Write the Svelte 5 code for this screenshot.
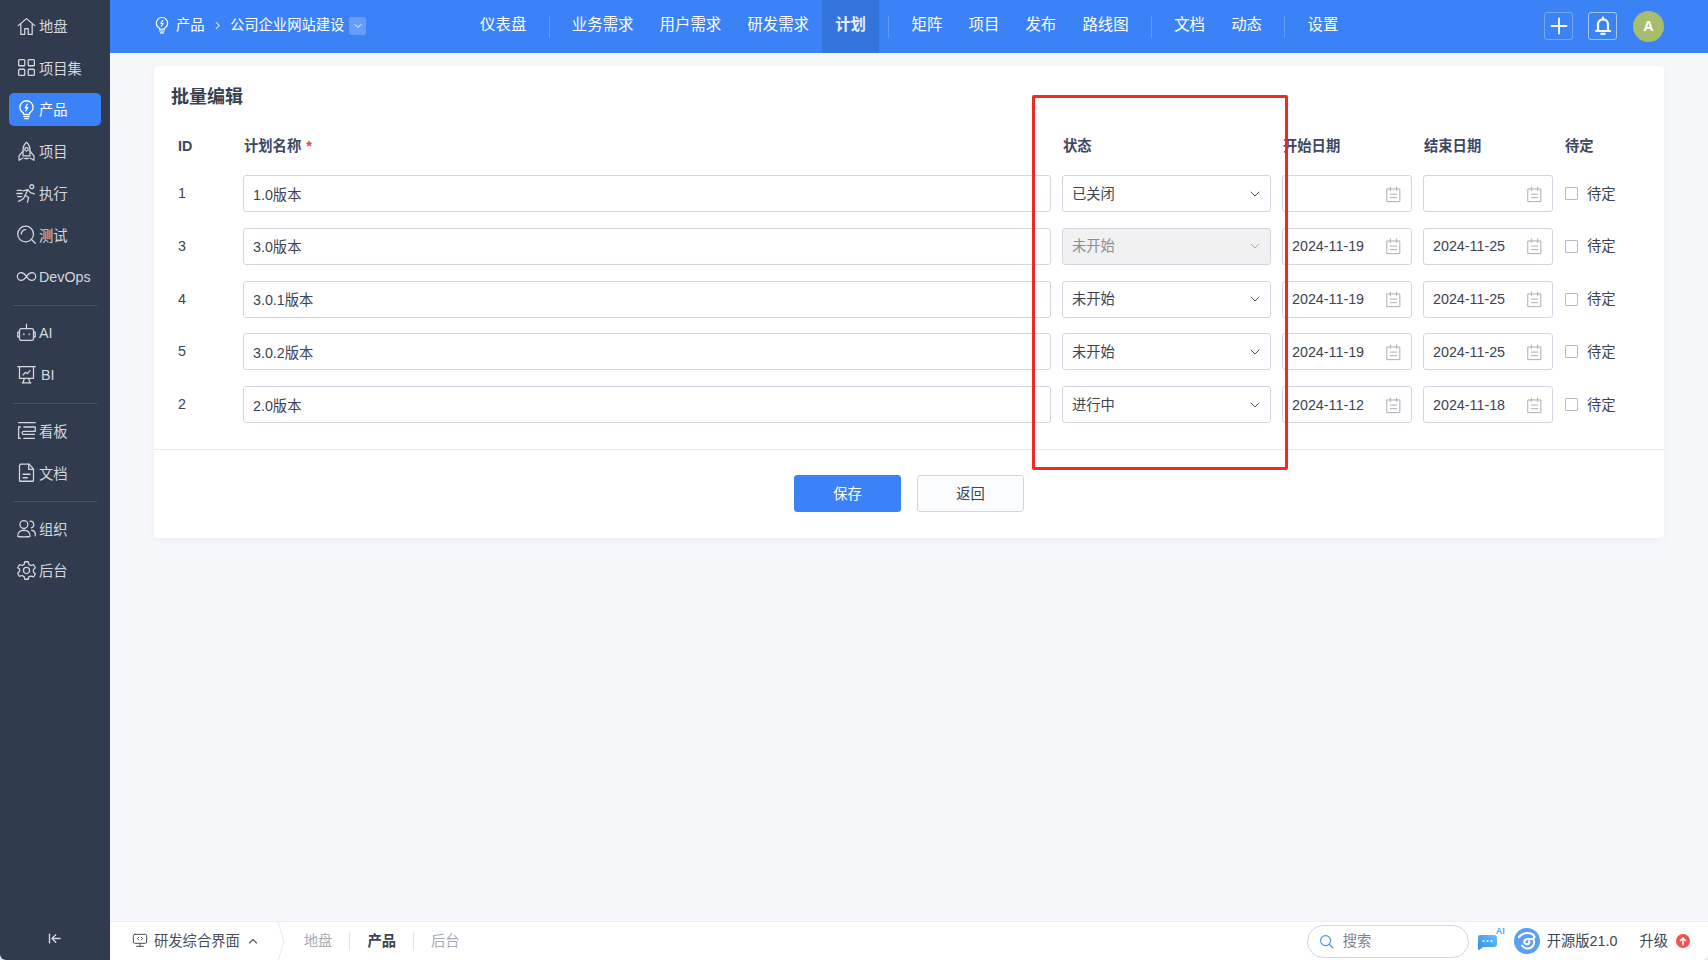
<script>
  const paths = {
    home: ['M2.5 11 12 3l9.500 8', 'M5.500 9V21h4.500v-6.500h4V21h4.500V9'],
    grid: ['M4 3h5a1 1 0 0 1 1 1v5a1 1 0 0 1-1 1H4a1 1 0 0 1-1-1V4a1 1 0 0 1 1-1z', 'M15 3h5a1 1 0 0 1 1 1v5a1 1 0 0 1-1 1h-5a1 1 0 0 1-1-1V4a1 1 0 0 1 1-1z', 'M4 14h5a1 1 0 0 1 1 1v5a1 1 0 0 1-1 1H4a1 1 0 0 1-1-1v-5a1 1 0 0 1 1-1z', 'M15 14h5a1 1 0 0 1 1 1v5a1 1 0 0 1-1 1h-5a1 1 0 0 1-1-1v-5a1 1 0 0 1 1-1z'],
    bulb: ['M8.500 17.500v-1.600C6 14.600 4.500 12.200 4.500 9.500a7.500 7.500 0 0 1 15 0c0 2.700-1.500 5.100-4 6.400v1.600z', 'M9 20h6', 'M10 22.500h4', 'M13 6l-2.500 4h3L11 13.500'],
    rocket: ['M12 1.500c3 2.500 4 6 4 9.500v6H8v-6c0-3.500 1-7 4-9.500z', 'M8 11.500l-4.500 5.500v5l4.500-2.500', 'M16 11.500l4.500 5.500v5l-4.500-2.500', 'M12 7.500a2 2 0 1 0 0 4 2 2 0 0 0 0-4z', 'M10 20h4'],
    run: ['M18 2a2.200 2.200 0 1 0 0 4.400A2.200 2.200 0 0 0 18 2z', 'M8 9l5.500-1.500 3 3.500 4.500 1.500', 'M13.500 7.500l-3 6.500 4 2.500-1.500 5.500', 'M10.500 14l-2 4-5.500 3', 'M1.500 8.500h5', 'M1 12h6', 'M2 15.500h4.500'],
    test: ['M11 2.500a9 9 0 1 0 0 18 9 9 0 0 0 0-18z', 'M17.500 17.500 22 22', 'M6 11.500a5 5 0 0 1 5-5'],
    inf: ['M12 12c-2-3-3.500-4.500-6-4.500a4.500 4.500 0 0 0 0 9c2.500 0 4-1.500 6-4.500zm0 0c2 3 3.500 4.500 6 4.500a4.500 4.500 0 0 0 0-9c-2.500 0-4 1.500-6 4.500z'],
    robot: ['M6 7.500h12a2 2 0 0 1 2 2V19a2 2 0 0 1-2 2H6a2 2 0 0 1-2-2V9.500a2 2 0 0 1 2-2z', 'M12 7.500V3', 'M12 2.500v.1', 'M4 11.500H2v5.500h2', 'M20 11.500h2v5.500h-2', 'M9 13.500v1', 'M15 13.500v1'],
    board: ['M2 3h20', 'M4 3v13.500h16V3', 'M8 21.500l1.500-5', 'M16 21.500l-1.500-5', 'M7 21.500h10', 'M8 12.500l3-3 2 1.500 3-3.500'],
    kanban: ['M3 3h19', 'M3 8h2', 'M3 8v13h2', 'M9 8h13v5H9c-1.500 0-2 .8-2 1.500v.5c0 1 .5 1.500 2 1.500h12', 'M9 21h12'],
    doc: ['M5 2.500h10l5 5.500v13a1 1 0 0 1-1 1H5a1 1 0 0 1-1-1v-17a1 1 0 0 1 1-1z', 'M14.500 2.500V8.500H20', 'M8 14h8', 'M8 18h5'],
    org: ['M9 3a4.500 4.500 0 1 0 0 9 4.500 4.500 0 0 0 0-9z', 'M2 21c-.5-5 3-7 7-7s7.500 2 7 7c-2 .8-12 .8-14 0z', 'M16 3.500a4 4 0 0 1 1.500 7.800', 'M18 14c3 .5 4.500 3 4 6.500'],
    gear: ['M12 8.500a3.500 3.500 0 1 0 0 7 3.500 3.500 0 0 0 0-7z', 'M10 2h4l.7 3 2.400 1.300 3-.9 2 3.400-2.200 2.200v2.800l2.200 2.200-2 3.400-3-.9L14.700 19 14 22h-4l-.7-3-2.400-1.300-3 .9-2-3.400 2.200-2.200v-2.800L1.900 8.800l2-3.400 3 .9L9.300 5z'],
    collapse: ['M4 5v14', 'M21 12H9', 'M14 6l-6 6 6 6'],
    chev: ['M6 9l6 6 6-6'],
    right: ['M9 5l7 7-7 7'],
    up: ['M5 16l7-7 7 7'],
    cal: ['M4 5h16v16H4z', 'M8 2.500V7', 'M16 2.500V7', 'M8 11.500h8', 'M8 16h8'],
    plus: ['M12 3v18', 'M3 12h18'],
    bell: ['M6 17.500V10a6 6 0 0 1 12 0v7.500', 'M3.500 18h17', 'M12 2v2', 'M10 21.500h4'],
    screen: ['M4 3.500h16a2 2 0 0 1 2 2V15a2 2 0 0 1-2 2H4a2 2 0 0 1-2-2V5.500a2 2 0 0 1 2-2z', 'M12 17v4', 'M7 21.500h10', 'M10 8l-2 2 2 2', 'M14 8l2 2-2 2'],
    search: ['M10.500 2.500a8 8 0 1 0 0 16 8 8 0 0 0 0-16z', 'M16.500 16.500 22 22']
  };

  const menu = [
    [{ icon: 'home', label: '地盘' }, { icon: 'grid', label: '项目集' }, { icon: 'bulb', label: '产品', active: true }, { icon: 'rocket', label: '项目' }, { icon: 'run', label: '执行' }, { icon: 'test', label: '测试' }, { icon: 'inf', label: 'DevOps', latin: true }],
    [{ icon: 'robot', label: 'AI', latin: true }, { icon: 'board', label: 'BI', latin: true }],
    [{ icon: 'kanban', label: '看板' }, { icon: 'doc', label: '文档' }],
    [{ icon: 'org', label: '组织' }, { icon: 'gear', label: '后台' }]
  ];

  const nav = [
    [{ label: '仪表盘' }],
    [{ label: '业务需求' }, { label: '用户需求' }, { label: '研发需求' }, { label: '计划', active: true }],
    [{ label: '矩阵' }, { label: '项目' }, { label: '发布' }, { label: '路线图' }],
    [{ label: '文档' }, { label: '动态' }],
    [{ label: '设置' }]
  ];

  const plans = [
    { id: 1, name: '1.0版本', status: '已关闭', begin: '', end: '' },
    { id: 3, name: '3.0版本', status: '未开始', begin: '2024-11-19', end: '2024-11-25', disabled: true },
    { id: 4, name: '3.0.1版本', status: '未开始', begin: '2024-11-19', end: '2024-11-25' },
    { id: 5, name: '3.0.2版本', status: '未开始', begin: '2024-11-19', end: '2024-11-25' },
    { id: 2, name: '2.0版本', status: '进行中', begin: '2024-11-12', end: '2024-11-18' }
  ];
</script>

{#snippet icon(name, cls = '')}
  <svg class={'ico ' + cls} viewBox="0 0 24 24" fill="none" stroke="currentColor" stroke-linecap="round" stroke-linejoin="round">
    {#each paths[name] as d}<path {d} />{/each}
  </svg>
{/snippet}

<div class="app">
  <aside class="side">
    {#each menu as group, g}
      {#if g > 0}<div class="side-sep"></div>{/if}
      {#each group as item}
        <div class="side-item" class:on={item.active}>
          {@render icon(item.icon, 'side-ico')}
          <span class="side-label" class:latin={item.latin} class:bi={item.label === 'BI'}>{item.label}</span>
        </div>
      {/each}
    {/each}
    <div class="side-foot">{@render icon('collapse', 'foot-ico')}</div>
  </aside>

  <div class="main">
    <header class="top">
      <div class="crumbs">
        {@render icon('bulb', 'crumb-ico')}
        <span class="lift">产品</span>
        {@render icon('right', 'crumb-sep')}
        <span class="crumb-name lift">公司企业网站建设</span>
        <span class="crumb-drop">{@render icon('chev', 'drop-ico')}</span>
      </div>
      <nav class="nav">
        {#each nav as group, g}
          {#if g > 0}<i class="nav-sep"></i>{/if}
          {#each group as item}
            <span class="nav-item" class:on={item.active}>{item.label}</span>
          {/each}
        {/each}
      </nav>
      <div class="tools">
        <span class="tool">{@render icon('plus', 'tool-plus')}</span>
        <span class="tool bright">{@render icon('bell', 'tool-bell')}</span>
        <span class="avatar">A</span>
      </div>
    </header>

    <main class="content">
      <section class="card">
        <h1 class="title">批量编辑</h1>
        <div class="table">
          <div class="th first">ID</div>
          <div class="th">计划名称 <em>*</em></div>
          <div class="th status-th">状态</div>
          <div class="th">开始日期</div>
          <div class="th">结束日期</div>
          <div class="th">待定</div>

          {#each plans as p}
            <div class="cell first id">{p.id}</div>
            <div class="field name">{p.name}</div>
            <div class="field select" class:disabled={p.disabled}>
              <span class="lift">{p.status}</span>
              {@render icon('chev', 'sel-ico')}
            </div>
            <div class="field date"><span>{p.begin}</span>{@render icon('cal', 'cal-ico')}</div>
            <div class="field date"><span>{p.end}</span>{@render icon('cal', 'cal-ico')}</div>
            <label class="cell check"><i class="box"></i><span class="lift">待定</span></label>
          {/each}
        </div>
        <div class="actions">
          <button class="btn primary">保存</button>
          <button class="btn">返回</button>
        </div>
        <div class="mark"></div>
      </section>
    </main>

    <footer class="bottom">
      <div class="mode">
        {@render icon('screen', 'mode-ico')}
        <span class="lift">研发综合界面</span>
        {@render icon('up', 'mode-up')}
      </div>
      <svg class="slash" viewBox="0 0 8 39" fill="none" stroke="#e5e7ec"><path d="M1 0l6 20-6 19" /></svg>
      <div class="tabs">
        <span class="tab lift">地盘</span><i></i><span class="tab cur lift">产品</span><i></i><span class="tab lift">后台</span>
      </div>
      <div class="status">
        <div class="search">{@render icon('search', 'search-ico')}<span class="lift">搜索</span></div>
        <div class="chat">
          <svg viewBox="0 0 25 22" width="25" height="22">
            <defs><linearGradient id="cg" x1="0" y1="1" x2="1" y2="0"><stop offset="0" stop-color="#2f8bf0" /><stop offset="1" stop-color="#6cc0fb" /></linearGradient></defs>
            <path d="M3 6h14a3 3 0 0 1 3 3v6a3 3 0 0 1-3 3H6l-4 3a1 1 0 0 1-1-1V8a2 2 0 0 1 2-2z" fill="url(#cg)" />
            <circle cx="6.500" cy="12" r="1" fill="#fff" /><circle cx="10.500" cy="12" r="1" fill="#fff" /><circle cx="14.500" cy="12" r="1" fill="#fff" />
          </svg>
          <b>AI</b>
        </div>
        <svg class="logo" viewBox="0 0 26 26">
          <circle cx="13" cy="13" r="13" fill="#5a9ff0" />
          <path d="M5 9c3-4 9-5 13-3 3 1.500 3 4 1 5-2 .8-4-.5-6 0-3 .8-4 4-1 5 2 .6 4-1 3-2.500" fill="none" stroke="#fff" stroke-width="2.200" stroke-linecap="round" />
          <path d="M20 13c1 4-3 8-7 7.500-2-.2-4-1.500-5-3" fill="none" stroke="#fff" stroke-width="2" stroke-linecap="round" />
        </svg>
        <span class="ver lift">开源版21.0</span>
        <span class="up lift">升级</span>
        <svg class="up-dot" viewBox="0 0 14 14">
          <circle cx="7" cy="7" r="7" fill="#f0524f" />
          <path d="M7 11V4.500M4.500 6.500 7 4l2.500 2.500" fill="none" stroke="#fff" stroke-width="1.500" stroke-linecap="round" />
        </svg>
      </div>
    </footer>
  </div>
</div>

<style>
  :global(body) {
    margin: 0;
    background: #e6e7ea;
  }

  .app {
    display: flex;
    height: 960px;
    overflow: hidden;
    border-radius: 0 0 6px 6px;
    font-family: "Liberation Sans", "Noto Sans CJK SC", sans-serif;
    font-size: 14.3px;
    color: #3c4353;
  }

  .ico {
    display: block;
    flex: none;
  }

  .lift {
    padding-bottom: 3px;
  }

  .side {
    flex: none;
    display: flex;
    flex-direction: column;
    gap: 8.8px;
    box-sizing: border-box;
    width: 110px;
    padding-top: 9.5px;
    background: #303b4e;
    color: #d3d8df;
  }

  .side-item {
    display: flex;
    align-items: center;
    gap: 2px;
    height: 33px;
    margin: 0 9px;
    padding-left: 6px;
    border-radius: 5px;
  }

  .side-item.on {
    background: #3b82f6;
    color: #fff;
  }

  .side-label {
    padding-bottom: 1.5px;
  }

  .side-label.latin {
    padding-bottom: 0;
  }

  .bi {
    margin-left: 2px;
  }

  :global(.side-ico) {
    width: 21px;
    height: 21px;
    margin: 0 .5px;
    stroke-width: 1.45;
  }

  .side-sep {
    height: 1px;
    margin: 3.3px 13px 1.3px;
    background: #47536a;
  }

  .side-foot {
    display: flex;
    justify-content: center;
    margin-top: auto;
    padding: 0 2px 14px 0;
  }

  :global(.foot-ico) {
    width: 15px;
    height: 15px;
    stroke-width: 2.2;
  }

  .main {
    flex: 1;
    display: flex;
    flex-direction: column;
    min-width: 0;
    background: #f6f7fa;
  }

  .top {
    flex: none;
    display: flex;
    align-items: center;
    height: 53px;
    padding: 0 44px 0 43px;
    background: #3b82f6;
    color: #fff;
  }

  .crumbs {
    display: flex;
    align-items: center;
    width: 314px;
    font-size: 14.3px;
  }

  .crumbs .lift {
    padding-bottom: 6px;
  }

  :global(.crumb-ico) {
    width: 18px;
    height: 18px;
    margin: 0 5px 3px 0;
    stroke-width: 1.6;
  }

  :global(.crumb-sep) {
    width: 11px;
    height: 11px;
    margin: 0 6.5px 3px 7.9px;
    stroke-width: 2.4;
    opacity: 0.7;
  }

  .crumb-name {
    white-space: nowrap;
  }

  .crumb-drop {
    display: flex;
    align-items: center;
    justify-content: center;
    width: 17px;
    height: 18px;
    margin: 0 0 1px 5px;
    border-radius: 2px;
    background: rgba(255, 255, 255, 0.22);
  }

  :global(.drop-ico) {
    width: 12px;
    height: 12px;
    stroke-width: 2;
  }

  .nav {
    display: flex;
    align-items: center;
    height: 53px;
    font-size: 15.4px;
  }

  .nav-item {
    display: flex;
    align-items: center;
    height: 53px;
    padding: 0 13.1px 7px;
    box-sizing: border-box;
    white-space: nowrap;
  }

  .nav-item.on {
    background: #3374dd;
    font-weight: 700;
    color: #e8eefb;
  }

  .nav-sep {
    width: 1px;
    height: 22px;
    margin: 0 9.2px;
    background: rgba(255, 255, 255, 0.22);
  }

  .tools {
    display: flex;
    align-items: center;
    margin-left: auto;
    padding-bottom: 1px;
  }

  .tool {
    display: flex;
    align-items: center;
    justify-content: center;
    box-sizing: border-box;
    width: 29px;
    height: 28px;
    margin-right: 15px;
    border: 1px solid rgba(255, 255, 255, 0.3);
    border-radius: 3px;
  }

  .tool.bright {
    margin-right: 16px;
    border-color: rgba(255, 255, 255, 0.55);
  }

  :global(.tool-plus) {
    width: 20px;
    height: 20px;
    stroke-width: 2.2;
  }

  :global(.tool-bell) {
    width: 20px;
    height: 20px;
    stroke-width: 2.6;
  }

  .avatar {
    display: flex;
    align-items: center;
    justify-content: center;
    width: 31px;
    height: 31px;
    border-radius: 50%;
    background: #a5bd6d;
    font-size: 14.3px;
    font-weight: 700;
  }

  .content {
    flex: 1;
    padding: 13px 44px 0;
    min-height: 0;
  }

  .card {
    position: relative;
    padding: 16px 0 25.5px;
    border-radius: 4px;
    background: #fff;
    box-shadow: 0 2px 8px rgba(40, 50, 70, 0.05);
  }

  .title {
    margin: 0 0 22.3px 17px;
    font-size: 18px;
    line-height: 30px;
    font-weight: 700;
    color: #383f4e;
  }

  .table {
    display: grid;
    grid-template-columns: 61px 808px 209px 130px 130px 1fr;
    grid-auto-rows: 37px;
    grid-template-rows: 25px;
    gap: 15.75px 11px;
    align-items: center;
    padding: 0 0 26px 17px;
    border-bottom: 1px solid #e9ebf0;
  }

  .th {
    height: 25px;
    line-height: 25px;
    padding-left: 1px;
    font-weight: 700;
    color: #3e4761;
    white-space: nowrap;
  }

  .th em {
    margin-left: 1px;
    font-style: normal;
    color: #e8453c;
  }

  .first {
    padding-left: 7px;
  }

  .th.first {
    padding-left: 7px;
  }

  .id {
    padding-bottom: 1px;
  }

  .field {
    display: flex;
    align-items: center;
    box-sizing: border-box;
    height: 37px;
    padding: 0 9px;
    border: 1px solid #d3d6e1;
    border-radius: 3px;
    background: #fff;
    white-space: nowrap;
  }

  .name {
    padding-bottom: 1px;
  }

  .select {
    justify-content: space-between;
  }

  .select.disabled {
    background: #f1f1f2;
    color: #8b8f97;
  }

  .select.disabled :global(.sel-ico) {
    color: #a3a7ae;
  }

  :global(.sel-ico) {
    width: 16px;
    height: 16px;
    margin-right: -2px;
    stroke-width: 1.35;
  }

  .date {
    justify-content: space-between;
  }

  :global(.cal-ico) {
    width: 19px;
    height: 19px;
    margin: 1px -1px 0 0;
    stroke-width: 1.25;
    color: #a9adb6;
  }

  .check {
    display: flex;
    align-items: center;
    gap: 9px;
    padding-left: 1px;
  }

  .box {
    box-sizing: border-box;
    width: 13px;
    height: 13px;
    border: 1px solid #b6bac5;
    border-radius: 1px;
  }

  .actions {
    display: flex;
    gap: 16px;
    padding: 25px 0 0 640px;
  }

  .btn {
    box-sizing: border-box;
    width: 107px;
    height: 37px;
    padding-bottom: 3px;
    border: 1px solid #d3d6e1;
    border-radius: 3px;
    background: #fbfcfd;
    font: inherit;
    color: #3c4353;
  }

  .btn.primary {
    border-color: #3b82f6;
    background: #3b82f6;
    color: #fff;
  }

  .mark {
    position: absolute;
    left: 878px;
    top: 29px;
    box-sizing: border-box;
    width: 256px;
    height: 375px;
    border: 3px solid #ee2a20;
    border-radius: 2px;
    pointer-events: none;
  }

  .bottom {
    flex: none;
    display: flex;
    align-items: center;
    box-sizing: border-box;
    height: 39px;
    padding: 0 18px 0 22px;
    border-top: 1px solid #eceef2;
    background: #fff;
  }

  .mode {
    display: flex;
    align-items: center;
    color: #484e5a;
  }

  :global(.mode-ico) {
    width: 16px;
    height: 16px;
    margin: 0 6px 2px 0;
    stroke-width: 1.5;
  }

  :global(.mode-up) {
    width: 12px;
    height: 12px;
    margin-left: 7px;
    stroke-width: 2.2;
  }

  .slash {
    flex: none;
    width: 8px;
    height: 39px;
    margin-left: 18px;
  }

  .tabs {
    display: flex;
    align-items: center;
    margin-left: 19px;
  }

  .tab {
    color: #a6abb4;
  }

  .tab.cur {
    font-weight: 700;
    color: #3c4353;
  }

  .tabs i {
    width: 1px;
    height: 18px;
    margin: 0 17px;
    background: #e3e5ea;
  }

  .status {
    display: flex;
    align-items: center;
    margin-left: auto;
  }

  .search {
    display: flex;
    align-items: center;
    box-sizing: border-box;
    width: 162px;
    height: 33px;
    padding-left: 11px;
    border: 1px solid #d3d6e1;
    border-radius: 17px;
    color: #7d828c;
  }

  :global(.search-ico) {
    width: 15px;
    height: 15px;
    margin-right: 9px;
    stroke-width: 1.8;
    color: #4a8ee0;
  }

  .chat {
    position: relative;
    width: 25px;
    height: 24px;
    margin: 0 12px 0 8px;
  }

  .chat b {
    position: absolute;
    right: -3px;
    top: -3px;
    font-size: 9px;
    color: #5aa9f5;
  }

  .logo {
    width: 26px;
    height: 26px;
    margin-right: 7px;
  }

  .ver {
    color: #3c4353;
  }

  .up {
    margin-left: 22px;
    color: #3c4353;
  }

  .up-dot {
    width: 14px;
    height: 14px;
    margin-left: 8px;
  }
</style>
